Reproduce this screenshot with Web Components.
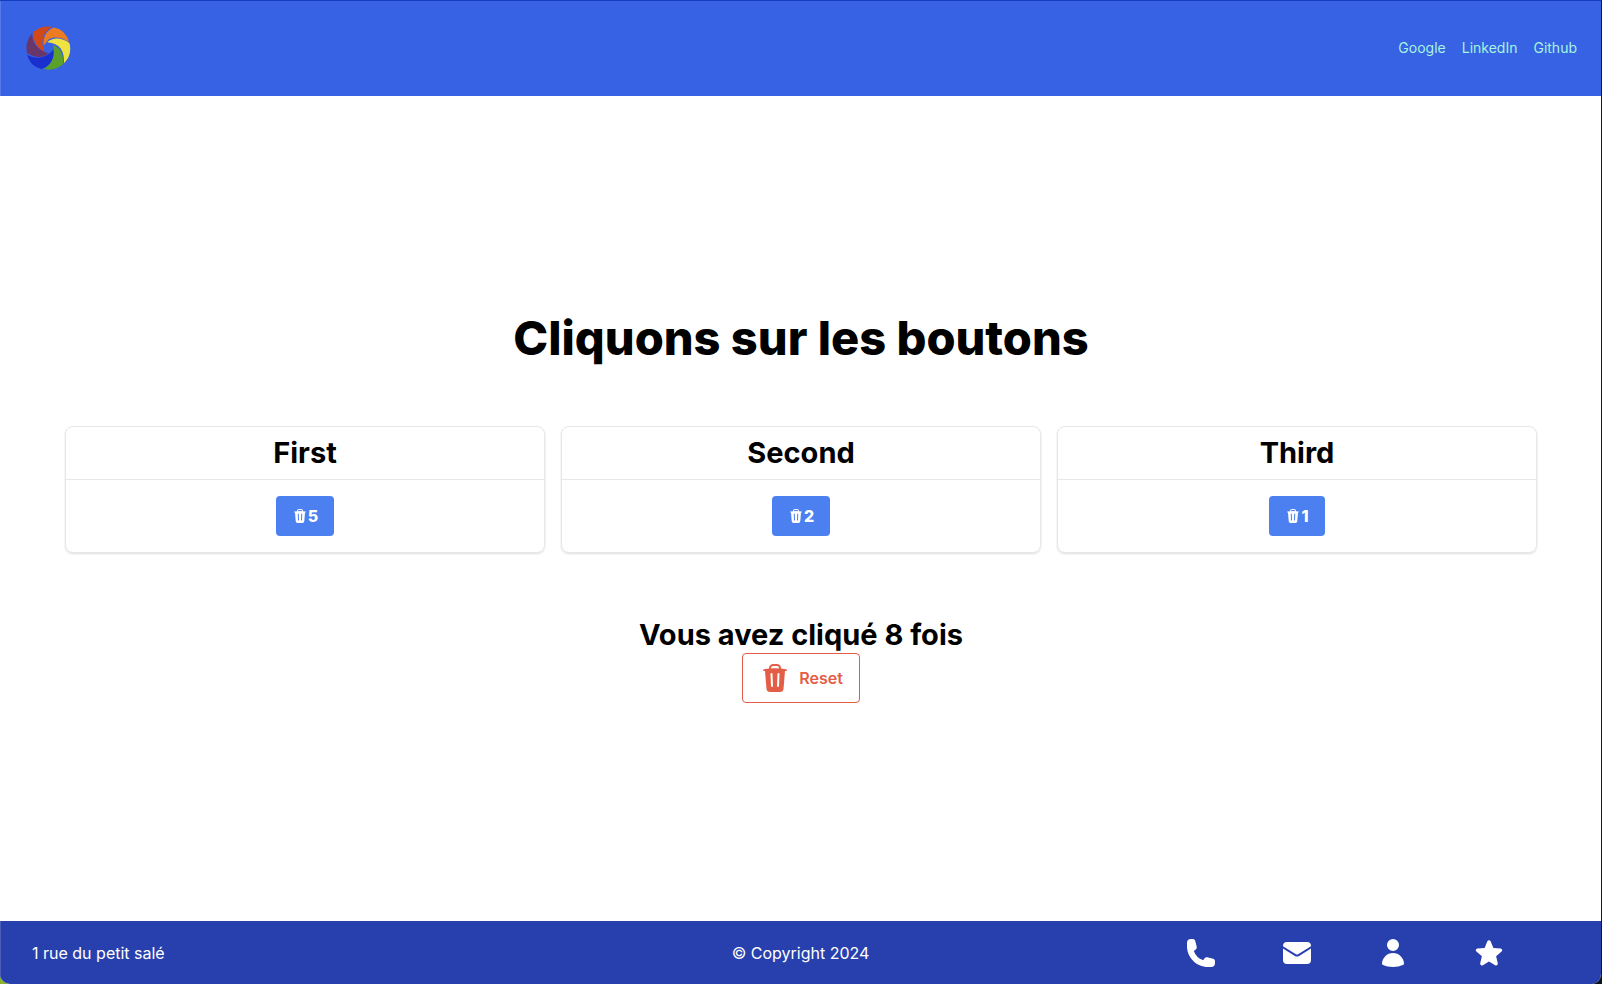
<!DOCTYPE html>
<html lang="fr">
<head>
<meta charset="utf-8">
<title>Cliquons sur les boutons</title>
<style>
html { height: 100%; background: linear-gradient(90deg, #8db32c 50%, #0c1216 50%); }
body { margin: 0; height: 100%; font: 16px/24px Inter, sans-serif; color: #000; }
</style>
</head>
<body>
<click-app></click-app>

<template id="t-app">
<style>
:host { display: flex; flex-direction: column; box-sizing: border-box; min-height: 100vh; background: #fff; border-top: 1px solid #153cbc; border-right: 1px solid #16191c; border-radius: 0 0 10px 10px; overflow: hidden; }
main { flex: 1; display: flex; flex-direction: column; align-items: center; justify-content: center; padding: 0 64px 0 65px; }
h1 { margin: 0; font-size: 47px; line-height: 48px; font-weight: 800; text-align: center; }
.cards { align-self: stretch; display: grid; grid-template-columns: repeat(3, 1fr); gap: 16px; margin: 64px 0; }
h2 { margin: 0; font-size: 29px; line-height: 36px; font-weight: 700; }
</style>
<site-header></site-header>
<main>
<h1>Cliquons sur les boutons</h1>
<div class="cards">
<count-card count="5">First</count-card>
<count-card count="2">Second</count-card>
<count-card count="1">Third</count-card>
</div>
<h2>Vous avez cliqué 8 fois</h2>
<reset-button>Reset</reset-button>
</main>
<site-footer></site-footer>
</template>

<template id="t-header">
<style>
:host { display: block; background: #3662e3; border-left: 1px solid #5479e8; }
header { display: flex; justify-content: space-between; align-items: center; padding: 23px 24px 24px 23px; }
svg { display: block; width: 48px; height: 48px; }
nav { display: flex; gap: 16px; }
a { font-size: 14px; line-height: 20px; color: #a7f3e0; text-decoration: none; }
</style>
<header>
<svg viewBox="0 0 48 48" role="img" aria-label="Logo">
<path fill="#d1491b" d="M9.300 8Q17 1.500 28.700 2.700C20.500 6.500 17.500 14 18.700 22L20.500 28C12 23 8.500 16 9.300 8Z"/>
<path fill="#ed7b22" d="M30 3.500Q42 6 45 18C37 12.500 30 12.500 25 15L19.500 21.700C19 13 22 6.500 30 3.500Z"/>
<path fill="#eee340" d="M23.300 18.300C29 13 38 13.500 45.500 19.200Q48.500 31 40 39.300C40.500 28 37 19.500 23.300 18.300Z"/>
<path fill="#5aa02a" d="M29.300 21C37 24 39.500 31 39.300 40Q31 47.500 19.500 45C27 41.500 31 34 29.300 21Z"/>
<path fill="#1930cf" d="M29.500 25.500C30.500 34 27 41.500 17.500 45Q6 42.500 3 30.500C12 36 22 34.500 29.500 25.500Z"/>
<path fill="#69366b" d="M8.300 9C7.500 18 13 26 24.800 29.500C18 34.500 10.500 34 3 29Q.500 18 8.300 9Z"/>
</svg>
<nav><a href="#google">Google</a><a href="#linkedin">LinkedIn</a><a href="#github">Github</a></nav>
</header>
</template>

<template id="t-card">
<style>
:host { display: block; border: 1px solid #e5e7eb; border-radius: 8px; box-shadow: 0 1px 2px rgba(0,0,0,.14); text-align: center; }
h2 { margin: 0; padding: 8px; border-bottom: 1px solid #e5e7eb; font-size: 29px; line-height: 36px; font-weight: 700; }
div { display: flex; justify-content: center; padding: 16px; }
button { display: flex; align-items: center; height: 40px; padding: 0 16px; border: 0; border-radius: 4px; background: #4c80f1; color: #fff; font: 800 16px/24px Inter, sans-serif; }
trash-icon { width: 16px; height: 16px; }
</style>
<h2><slot></slot></h2>
<div><button type="button"><trash-icon></trash-icon><span></span></button></div>
</template>

<template id="t-reset">
<style>
:host { display: block; }
button { display: flex; align-items: center; gap: 8px; padding: 8px 16px; border: 1px solid #e35d47; border-radius: 4px; background: transparent; color: #e35d47; font: 600 16px/24px Inter, sans-serif; }
trash-icon { width: 32px; height: 32px; }
</style>
<button type="button"><trash-icon></trash-icon><slot></slot></button>
</template>

<template id="t-trash">
<style>
:host { display: block; }
svg { display: block; width: 100%; height: 100%; fill: currentColor; }
</style>
<svg viewBox="0 0 32 32" aria-hidden="true"><path fill-rule="evenodd" d="M10 6.600V6.200A4.200 4.200 0 0 1 14.200 2H17.800A4.200 4.200 0 0 1 22 6.200V6.600L27 7.200A.8.800 0 0 1 27 9H26L24.600 26A4 4 0 0 1 20.600 30H11.400A4 4 0 0 1 7.400 26L6 9H5A.8.800 0 0 1 5 7.200ZM12 6.400Q16 6 20 6.400V6A2 2 0 0 0 18 4H14A2 2 0 0 0 12 6ZM11.500 12L12 24A1 1 0 0 0 14 24L13.500 12A1 1 0 0 0 11.500 12ZM18.500 12L18 24A1 1 0 0 0 20 24L20.500 12A1 1 0 0 0 18.500 12Z"/></svg>
</template>

<template id="t-footer">
<style>
:host { display: block; background: #2840ad; border-left: 1px solid #4a5eba; color: #fff; }
footer { display: grid; grid-template-columns: 1fr auto 1fr; align-items: center; padding: 16px 32px 15px 31px; }
p { margin: 0; }
ul { display: flex; justify-content: flex-end; margin: 0; padding: 0; list-style: none; }
li { padding-right: 64px; }
svg { display: block; width: 32px; height: 32px; fill: #fff; }
</style>
<footer>
<p>1 rue du petit salé</p>
<p>© Copyright 2024</p>
<ul>
<li><svg viewBox="0 0 24 24" role="img" aria-label="Téléphone"><path d="M1.500 4.500a3 3 0 0 1 3-3h1.372c.86 0 1.610.586 1.819 1.420l1.105 4.423a1.875 1.875 0 0 1-.694 1.955l-1.293.97c-.135.101-.164.249-.126.352a11.285 11.285 0 0 0 6.697 6.697c.103.038.25.009.352-.126l.97-1.293a1.875 1.875 0 0 1 1.955-.694l4.423 1.105c.834.209 1.420.959 1.420 1.820V19.500a3 3 0 0 1-3 3h-2.250C8.552 22.500 1.500 15.448 1.500 6.750V4.500Z"/></svg></li>
<li><svg viewBox="0 0 24 24" role="img" aria-label="Courriel"><path d="M1.500 8.670v8.580a3 3 0 0 0 3 3h15a3 3 0 0 0 3-3V8.670l-8.928 5.493a3 3 0 0 1-3.144 0L1.500 8.670Z"/><path d="M22.500 6.908V6.750a3 3 0 0 0-3-3h-15a3 3 0 0 0-3 3v.158l9.714 5.978a1.500 1.500 0 0 0 1.572 0L22.500 6.908Z"/></svg></li>
<li><svg viewBox="0 0 24 24" role="img" aria-label="Profil"><path d="M7.500 6a4.500 4.500 0 1 1 9 0 4.500 4.500 0 0 1-9 0ZM3.751 20.105a8.250 8.250 0 0 1 16.498 0 .75.750 0 0 1-.437.695A18.683 18.683 0 0 1 12 22.500c-2.786 0-5.433-.608-7.812-1.700a.75.750 0 0 1-.437-.695Z"/></svg></li>
<li><svg viewBox="0 0 24 24" role="img" aria-label="Favoris"><path d="M10.788 3.210c.448-1.077 1.976-1.077 2.424 0l2.082 5.006 5.404.434c1.164.093 1.636 1.545.749 2.305l-4.117 3.527 1.257 5.273c.271 1.136-.964 2.033-1.960 1.425L12 18.354 7.373 21.180c-.996.608-2.231-.29-1.960-1.425l1.257-5.273-4.117-3.527c-.887-.76-.415-2.212.749-2.305l5.404-.434 2.082-5.005Z"/></svg></li>
</ul>
</footer>
</template>

<script>
class Base extends HTMLElement {
  constructor() {
    super();
    const template = document.getElementById(this.constructor.template);
    this.attachShadow({ mode: "open" }).append(document.importNode(template.content, true));
  }
}
customElements.define("trash-icon", class extends Base { static template = "t-trash"; });
customElements.define("count-card", class extends Base {
  static template = "t-card";
  static observedAttributes = ["count"];
  attributeChangedCallback(name, before, value) {
    this.shadowRoot.querySelector("span").textContent = value;
  }
});
customElements.define("reset-button", class extends Base { static template = "t-reset"; });
customElements.define("site-header", class extends Base { static template = "t-header"; });
customElements.define("site-footer", class extends Base { static template = "t-footer"; });
customElements.define("click-app", class extends Base { static template = "t-app"; });
</script>
</body>
</html>
